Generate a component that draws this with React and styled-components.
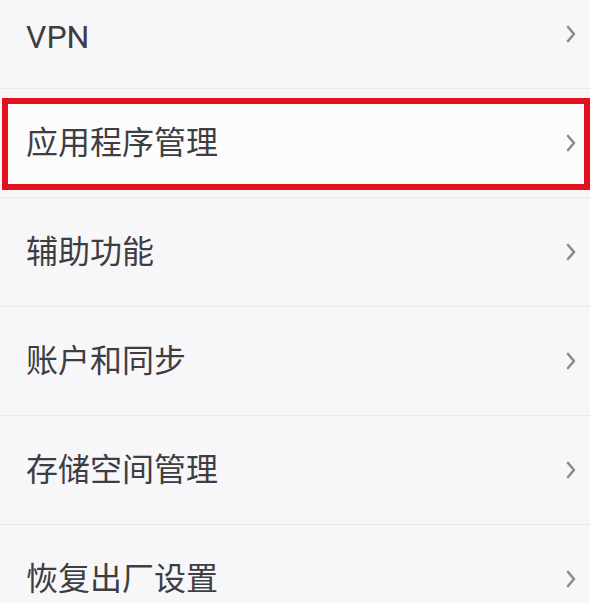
import React from 'react'
import styled, { createGlobalStyle } from 'styled-components'

const GlobalStyle = createGlobalStyle`
  html, body {
    margin: 0;
    padding: 0;
    background: #f7f7f9;
    overflow: hidden;
  }
`

const Page = styled.div`
  width: 590px;
  height: 603px;
  overflow: hidden;
  background: #f7f7f9;
  font-family: Roboto, "Noto Sans CJK SC", sans-serif;
`

const List = styled.ul`
  list-style: none;
  margin: -20px 0 0;
  padding: 0;
`

const Row = styled.li`
  position: relative;
  height: 108px;
  display: flex;
  align-items: center;
  justify-content: space-between;
  padding: 0 13px 0 26px;
  border-bottom: 1px solid #e9e9ec;
  box-sizing: content-box;
`

const Label = styled.span`
  font-size: 32px;
  line-height: 1;
  color: #3e3e42;
  position: relative;
  z-index: 1;
  padding-top: ${(p) => (p.$latin ? '5px' : '0')};
`

const Highlight = styled.div`
  position: absolute;
  top: 9px;
  bottom: 7px;
  left: 2px;
  right: 0;
  border: 6px solid #e3111b;
  background: #fcfcfd;
  box-sizing: border-box;
`

const Chevron = () => (
  <svg
    width="12"
    height="18"
    viewBox="0 0 12 18"
    style={{ position: 'relative', zIndex: 1 }}
  >
    <path
      d="M3 2 L9 9 L3 16"
      fill="none"
      stroke="#8c8c90"
      strokeWidth="2.6"
      strokeLinecap="round"
      strokeLinejoin="round"
    />
  </svg>
)

const items = [
  { label: 'VPN', latin: true },
  { label: '应用程序管理', marked: true },
  { label: '辅助功能' },
  { label: '账户和同步' },
  { label: '存储空间管理' },
  { label: '恢复出厂设置' },
]

const App = () => (
  <Page>
    <GlobalStyle />
    <List>
      {items.map((item) => (
        <Row key={item.label}>
          {item.marked && <Highlight />}
          <Label $latin={item.latin}>{item.label}</Label>
          <Chevron />
        </Row>
      ))}
    </List>
  </Page>
)

export default App
